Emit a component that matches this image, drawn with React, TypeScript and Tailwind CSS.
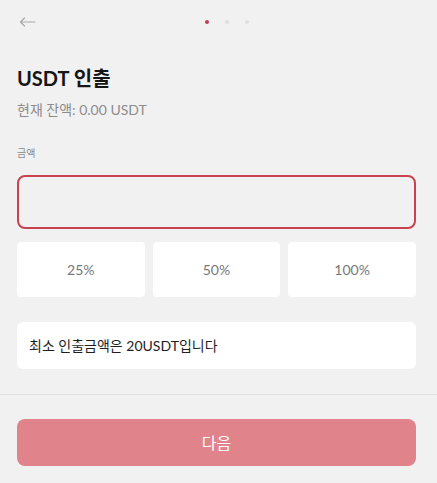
import React, { useState } from 'react';

const PERCENTS = ['25%', '50%', '100%'];

export default function App() {
  const [amount, setAmount] = useState('');

  return (
    <div className="w-[437px] h-[483px] bg-[#f2f1f1] font-['Lato','Noto_Sans_CJK_KR',sans-serif] flex flex-col overflow-hidden">
      {/* Header */}
      <div className="h-[44px] px-[19px] flex items-center relative">
        <svg width="17" height="10" viewBox="0 0 17 10" fill="none" className="mt-[-1px]">
          <path d="M16 5H1.5M5.5 1L1.5 5L5.5 9" stroke="#a9a9a9" strokeWidth="1.2" strokeLinecap="round" strokeLinejoin="round" />
        </svg>
        <div className="absolute left-[205px] top-[20px] flex gap-[16px]">
          <span className="w-[4px] h-[4px] rounded-full bg-[#c23a5c]" />
          <span className="w-[4px] h-[4px] rounded-full bg-[#dedede]" />
          <span className="w-[4px] h-[4px] rounded-full bg-[#dedede]" />
        </div>
      </div>

      {/* Body */}
      <div className="pl-[17px] pr-[21px] flex flex-col">
        <h1 className="mt-[21px] text-[20px] leading-[26px] font-bold text-[#161616]">USDT 인출</h1>
        <p className="mt-[10px] text-[14px] leading-[18px] text-[#8c8c8c]">현재 잔액: 0.00 USDT</p>

        <label className="mt-[27px] text-[10px] leading-[14px] text-[#8c8c8c]">금액</label>
        <input
          value={amount}
          onChange={(e) => setAmount(e.target.value)}
          className="mt-[15px] h-[54px] w-full rounded-[8px] border-2 border-[#c9424f] bg-transparent px-3 text-[15px] outline-none"
        />

        <div className="mt-[13px] grid grid-cols-3 gap-[8px]">
          {PERCENTS.map((p) => (
            <button
              key={p}
              className="h-[55px] rounded-[4px] bg-white text-[14px] text-[#777] flex items-center justify-center"
            >
              {p}
            </button>
          ))}
        </div>

        <div className="mt-[25px] h-[47px] rounded-[6px] bg-white px-[12px] flex items-center text-[14px] text-[#1e1e1e]">
          최소 인출금액은 20USDT입니다
        </div>
      </div>

      <div className="mt-[25px] h-px bg-[#e2e2e2]" />

      <div className="pl-[17px] pr-[21px] pt-[24px]">
        <button className="w-full h-[47px] rounded-[8px] bg-[#e0838a] text-white text-[16px] flex items-center justify-center">
          다음
        </button>
      </div>
    </div>
  );
}
